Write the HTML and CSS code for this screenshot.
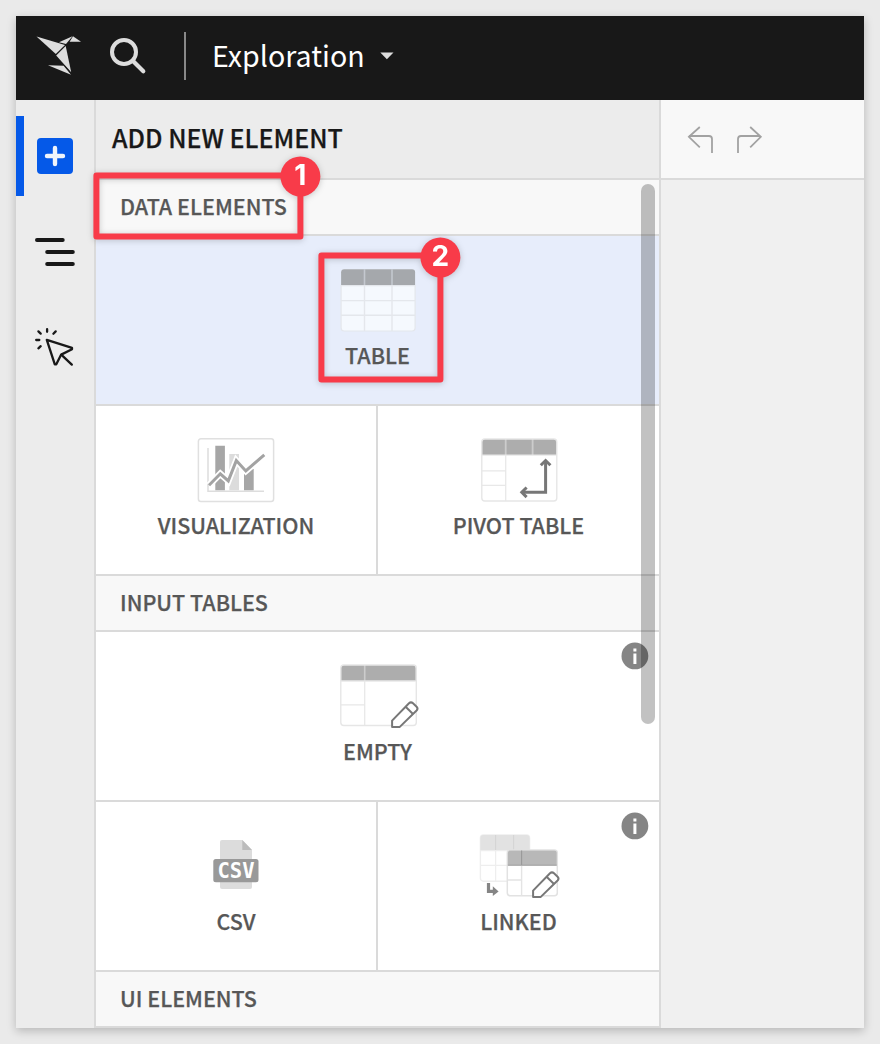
FILE: index.html
```
<!DOCTYPE html>
<html lang="en">
<head>
<meta charset="utf-8">
<title>Exploration</title>
<link rel="stylesheet" href="styles.css">
</head>
<body>
<svg width="0" height="0" class="defs">
  <defs>
    <g id="pencil" fill="#fff" stroke="#777" stroke-width="2" stroke-linejoin="round">
      <path d="M54.3 63.9V57.6L71.2 40.3Q73.2 38.4 75.2 40.3L78.8 43.7Q80.6 45.6 78.8 47.5L62 63.9Z"/>
      <path d="M67.8 43.8L75.2 51"/>
    </g>
    <g id="info">
      <circle cx="13.5" cy="13.5" r="13.4" fill="#858585"/>
      <path d="M12 6h3v3h-3zM12 11h3v10.6h-3z" fill="#fff"/>
    </g>
  </defs>
</svg>
<div class="window">
  <header class="topbar">
    <svg class="bird" width="46" height="42" viewBox="0 0 46 42" fill="#ddd">
      <path d="M.5 1.5L29 9.9 19.8 19Z"/>
      <path d="M23 7.2L36.5 1.2 30 9Z"/>
      <path d="M37 1.3L45 6.8H33.6Z"/>
      <path d="M29.7 10.9L35.2 37.2 20.2 20.4Z"/>
      <path d="M12 30.3L27.7 30.7 35 39.8Z"/>
      <path d="M28.2 30.2L35.3 38.7" stroke="#181818" stroke-width="1"/>
    </svg>
    <svg class="search" width="38" height="38" viewBox="0 0 38 38" fill="none" stroke="#ddd" stroke-linecap="round">
      <circle cx="15" cy="15" r="12" stroke-width="4"/>
      <path d="M24.5 24.5L34.3 34.3" stroke-width="4.2"/>
    </svg>
    <span class="divider"></span>
    <span class="title">Exploration</span>
    <svg class="caret" width="14" height="8" viewBox="0 0 14 8"><path d="M.3.5H13.5L6.9 7.3Z" fill="#ddd"/></svg>
  </header>
  <div class="body">
    <nav class="rail">
      <div class="rail-item active">
        <svg width="36" height="36" viewBox="0 0 36 36"><rect width="36" height="36" rx="4" fill="#0559e8"/><path d="M10 18H26M18 10V26" stroke="#f0f4fb" stroke-width="4.4" stroke-linecap="round"/></svg>
      </div>
      <div class="rail-item">
        <svg width="40" height="30" viewBox="0 0 40 30" stroke="#181818" stroke-width="4" stroke-linecap="round"><path d="M2 3H27.7M12.2 15H37.8M12.2 27H37.8"/></svg>
      </div>
      <div class="rail-item">
        <svg class="click" width="40" height="40" viewBox="0 0 40 40" fill="none" stroke="#181818" stroke-width="2.3" stroke-linecap="round" stroke-linejoin="round">
          <path d="M11.8 12.8L37 20.8V22.2L26.2 27.6 21.3 37.3H19.8Z"/>
          <path d="M26.5 27.8L36.8 37.6M12.1 2.2V4.8M1.2 13H4.3M3.4 4.4L5.7 6.6M20.7 4.4L18.4 6.7M3.4 21.3L5.7 19.2"/>
        </svg>
      </div>
    </nav>
    <section class="panel">
      <h1 class="heading">ADD NEW ELEMENT</h1>
      <h2 class="group">DATA ELEMENTS</h2>
      <div class="row">
        <div class="tile selected">
          <svg class="icon" width="80" height="66" viewBox="0 0 80 66">
            <rect x="3.3" y="2.2" width="74" height="61.8" rx="3" fill="#f5f9fe"/>
            <path d="M3.3 18V5.2a3 3 0 0 1 3-3H74.3a3 3 0 0 1 3 3V18Z" fill="#a5a8ac"/>
            <path d="M26.7 18V64M54.2 18V64M3.3 33.6H77.3M3.3 48.3H77.3M3.3 18.6H77.3" stroke="#e4e7ec" stroke-width="1.4"/>
            <path d="M26.7 2V18M54.2 2V18" stroke="#c4c8cf" stroke-width="1.6"/>
            <path d="M3.3 18V61a3 3 0 0 0 3 3H74.3a3 3 0 0 0 3-3V18" fill="none" stroke="#e4e7ec" stroke-width="1.2"/>
          </svg>
          <span class="label">TABLE</span>
        </div>
      </div>
      <div class="row split">
        <div class="tile">
          <svg class="icon" width="80" height="66" viewBox="0 0 80 66" fill="none">
            <rect x="2.4" y="1.8" width="75.2" height="62.6" rx="2.5" stroke="#e0e0e0" stroke-width="1.5"/>
            <path d="M12 11V54.3H68" stroke="#ddd" stroke-width="1.5"/>
            <path d="M19.3 8.7h9.6v44.6h-9.6zM48 32h9.7v21.3H48z" fill="#a6a6a6"/>
            <path d="M33.3 17H43v36.3h-9.7z" fill="#dcdcdc"/>
            <path d="M13 48.2L24.3 36.8 32.3 43.9 40.3 23.6 49.8 34 68.3 17.8" stroke="#fff" stroke-width="6.6"/>
            <path d="M13 48.2L24.3 36.8 32.3 43.9 40.3 23.6 49.8 34 68.3 17.8" stroke="#a3a3a3" stroke-width="3"/>
          </svg>
          <span class="label">VISUALIZATION</span>
        </div>
        <div class="tile">
          <svg class="icon" width="80" height="66" viewBox="0 0 80 66" fill="none">
            <path d="M3 18V5a3 3 0 0 1 3-3H75a3 3 0 0 1 3 3V18Z" fill="#adadad"/>
            <path d="M26.9 2V18M53.8 2V18" stroke="#ccc" stroke-width="1.8"/>
            <path d="M3 18.2H78M26.9 18V64M3 33.8H27M3 48.4H27" stroke="#e8e8e8" stroke-width="1.3"/>
            <rect x="3" y="2" width="75" height="62" rx="3" stroke="#e6e6e6" stroke-width="1.4"/>
            <g stroke="#777" stroke-width="3"><path d="M66.8 24V55.3H43.5"/><path d="M62 28.3L66.8 23.5 71.6 28.3M47.8 50.5L43 55.3 47.8 60.1"/></g>
          </svg>
          <span class="label">PIVOT TABLE</span>
        </div>
      </div>
      <h2 class="group">INPUT TABLES</h2>
      <div class="row">
        <div class="tile">
          <svg class="icon" width="80" height="66" viewBox="0 0 80 66" fill="none">
            <path d="M3 18V5a3 3 0 0 1 3-3H75a3 3 0 0 1 3 3V18Z" fill="#adadad"/>
            <path d="M26.9 2V18" stroke="#ccc" stroke-width="1.6"/>
            <path d="M3 18H78M26.9 18V62M3 41.8H27" stroke="#e8e8e8" stroke-width="1.3"/>
            <rect x="3" y="2" width="75.5" height="60.5" rx="3" stroke="#e6e6e6" stroke-width="1.4"/>
            <use href="#pencil"/>
          </svg>
          <span class="label">EMPTY</span>
          <svg class="info" width="27" height="27" viewBox="0 0 27 27"><use href="#info"/></svg>
        </div>
      </div>
      <div class="row split">
        <div class="tile">
          <svg class="icon" width="80" height="66" viewBox="0 0 80 66">
            <path d="M26 7H46.3L56 17V54a2 2 0 0 1-2 2H26a2 2 0 0 1-2-2V9a2 2 0 0 1 2-2Z" fill="#dcdcdc"/>
            <path d="M46.3 7L56 17H46.3Z" fill="#bcbcbc"/>
            <rect x="17.3" y="26" width="45.2" height="23.2" rx="2.5" fill="#999"/>
            <text x="40" y="45.4" class="csv" text-anchor="middle" textLength="37" lengthAdjust="spacingAndGlyphs">CSV</text>
          </svg>
          <span class="label">CSV</span>
        </div>
        <div class="tile">
          <svg class="icon" width="80" height="66" viewBox="0 0 80 66" fill="none">
            <rect x="1.6" y="2" width="49.2" height="46.2" rx="3" fill="#fff" stroke="#eee" stroke-width="1.4"/>
            <path d="M1.6 17.3V5a3 3 0 0 1 3-3H47.8a3 3 0 0 1 3 3V17.3Z" fill="#e2e2e2"/>
            <path d="M16.8 2V17M34.8 2V17" stroke="#d3d3d3"/>
            <path d="M2 17.6H50M16.8 18V48M34.8 18V48M2 32.3H50" stroke="#eee" stroke-width="1.3"/>
            <rect x="28.5" y="17" width="50" height="45.8" rx="3" fill="#fff" stroke="#e2e2e2" stroke-width="1.5"/>
            <path d="M29 32V20a2.5 2.5 0 0 1 2.5-2.5H75.5A2.5 2.5 0 0 1 78 20V32Z" fill="#b8b8b8"/>
            <path d="M29 32.3H78M42.8 17.5V32" stroke="#999" stroke-width="1.1"/>
            <path d="M42.8 33V63M29 47H43" stroke="#e4e4e4" stroke-width="1.4"/>
            <path d="M9.7 50V58.4H15" stroke="#858585" stroke-width="3.2"/>
            <path d="M14 53.2L19.8 58.4 14 63Z" fill="#858585"/>
            <use href="#pencil"/>
          </svg>
          <span class="label">LINKED</span>
          <svg class="info" width="27" height="27" viewBox="0 0 27 27"><use href="#info"/></svg>
        </div>
      </div>
      <h2 class="group">UI ELEMENTS</h2>
      <div class="scrollbar"></div>
      <div class="callout callout-data"><span class="badge">1</span></div>
      <div class="callout callout-table"><span class="badge">2</span></div>
    </section>
    <main class="canvas">
      <div class="toolbar">
        <svg width="27" height="28" viewBox="0 0 27 28" fill="none" stroke="#a2a2a2" stroke-width="1.8"><path d="M11.8 1L.9 10.8 11.8 21.3M.9 10H21Q24 10 24 13V27"/></svg>
        <svg width="27" height="28" viewBox="0 0 27 28" fill="none" stroke="#a2a2a2" stroke-width="1.8"><path d="M14.2 1L24.8 10.8 14.2 21.3M24.5 10H5Q2 10 2 13V27"/></svg>
      </div>
    </main>
  </div>
</div>
</body>
</html>
```
FILE: styles.css
```
* { box-sizing: border-box; }
body {
  margin: 0;
  padding: 16px;
  height: 1044px;
  overflow: hidden;
  background: #eaeaea;
  color: #575757;
  font-family: "Noto Sans CJK SC", "Noto Sans", sans-serif;
}
svg { display: block; flex: none; overflow: visible; }
.defs { position: absolute; }
.window {
  width: 848px;
  height: 1012px;
  display: flex;
  flex-direction: column;
  background: #ececec;
  box-shadow: 0 3px 9px rgba(0, 0, 0, .22);
}
.topbar {
  height: 84px;
  flex: none;
  display: flex;
  align-items: center;
  padding-left: 20px;
  background: #181818;
  color: #fff;
}
.bird { margin-top: -4px; }
.search { margin: -4px 0 0 27px; }
.divider { width: 2px; height: 48px; margin: -4px 26px 0 37px; background: #888; }
.title {
  width: 153px;
  margin-top: -6px;
  font-size: 28.6px;
  line-height: 40px;
  white-space: nowrap;
}
.caret { margin: -5px 0 0 15px; }
.body { flex: 1; display: flex; min-height: 0; }
.rail { width: 78px; padding-top: 16px; }
.rail-item {
  height: 80px;
  margin-bottom: 16px;
  display: flex;
  align-items: center;
  justify-content: center;
}
.rail-item.active { border-left: 8px solid #0559e8; padding-right: 8px; }
.click { margin-top: -2px; }
.panel {
  position: relative;
  width: 567px;
  border: solid #dadada;
  border-width: 0 2px;
}
.heading, .group {
  margin: 0;
  display: flex;
  align-items: center;
  border-bottom: 2px solid #dadada;
  white-space: nowrap;
  font-weight: 500;
  -webkit-text-stroke: .25px currentColor;
}
.heading {
  height: 80px;
  padding: 0 0 4px 16px;
  color: #181818;
  font-size: 25px;
  line-height: 36px;
}
.group {
  height: 56px;
  padding: 0 0 3px 24px;
  background: #f8f8f8;
  font-size: 21.5px;
  line-height: 32px;
}
.row { height: 170px; display: flex; border-bottom: 2px solid #dadada; }
.tile {
  position: relative;
  flex: 1;
  display: flex;
  flex-direction: column;
  align-items: center;
  padding-top: 31px;
  background: #fff;
}
.split .tile:first-child { flex: 0 0 280px; }
.tile + .tile { border-left: 2px solid #dadada; }
.selected { background: #e7edfb; }
.row:not(.split) .icon, .tile + .tile .icon { transform: translateX(-.2px); }
.label {
  margin-top: 6px;
  font-size: 21.5px;
  line-height: 32px;
  font-weight: 500;
  white-space: nowrap;
  -webkit-text-stroke: .25px currentColor;
}
.csv { font: bold 21.5px "DejaVu Sans Mono", monospace; fill: #fff; }
.info { position: absolute; right: 11px; top: 10px; transform: translate(.4px, .4px); }
.scrollbar {
  position: absolute;
  right: 4px;
  top: 84px;
  width: 14px;
  height: 540px;
  border-radius: 7px;
  background: rgba(0, 0, 0, .24);
}
.callout {
  position: absolute;
  border: 6px solid #f83b49;
  border-radius: 3px;
  filter: drop-shadow(0 1px 3px rgba(0, 0, 0, .2));
  transform: translate(.4px, .4px);
}
.callout-data { left: -3px; top: 72px; width: 210px; height: 67px; }
.callout-table { left: 222px; top: 152px; width: 125px; height: 130px; }
.badge {
  position: absolute;
  right: -23px;
  top: -22px;
  width: 40px;
  height: 40px;
  border-radius: 50%;
  background: #f83b49;
  color: #fff;
  font: bold 28px/39px Inter, sans-serif;
  text-align: center;
}
.callout-table .badge { top: -21px; }
.canvas { flex: 1; background: #f0f0f0; }
.toolbar {
  height: 80px;
  display: flex;
  gap: 21px;
  padding: 26px 0 0 27px;
  background: #f8f8f8;
  border-bottom: 2px solid #dadada;
}
```
